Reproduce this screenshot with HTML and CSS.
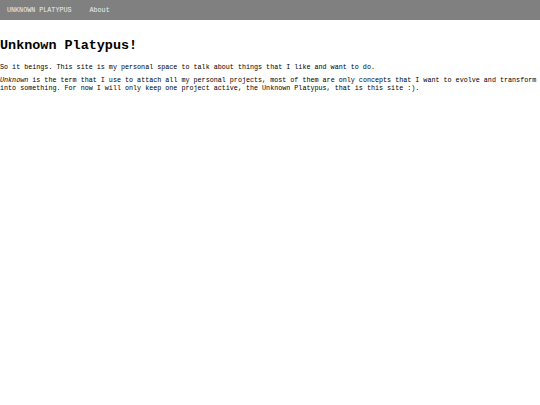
FILE: index.html
```html
<!DOCTYPE html>
<html>
<head>
<meta charset="utf-8">
<link rel="stylesheet" href="styles.css">
</head>
<body>
<nav class="nav">
  <a class="nav-item" href="#">UNKNOWN PLATYPUS</a>
  <a class="nav-item" href="#">About</a>
</nav>
<main class="content">
  <h1 class="title">Unknown Platypus!</h1>
  <p class="text">So it beings. This site is my personal space to talk about things that I like and want to do.</p>
  <p class="text"><em>Unknown</em> is the term that I use to attach all my personal projects, most of them are only concepts that I want to evolve and transform into something. For now I will only keep one project active, the Unknown Platypus, that is this site :).</p>
</main>
</body>
</html>
```
FILE: styles.css
```css
html, body {
  margin: 0;
  padding: 0;
  background: #fff;
}
.nav {
  display: flex;
  align-items: center;
  gap: 18px;
  height: 20px;
  padding: 0 7px;
  background: #808080;
}
.nav-item {
  font-family: "Liberation Mono", monospace;
  font-size: 6.73px;
  color: #eeeeee;
  text-decoration: none;
}
.content {
  font-family: "Liberation Mono", monospace;
  color: #000;
}
.title {
  font-size: 13.45px;
  font-weight: bold;
  margin: 18px 0 9px;
  line-height: 1.2;
}
.text {
  font-size: 6.73px;
  line-height: 8px;
  margin: 0 0 5px;
}
```
